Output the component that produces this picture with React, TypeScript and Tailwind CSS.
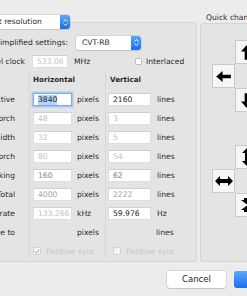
const Arrow = ({ rot = 0 }: { rot?: number }) => (
  <svg width="15" height="11" viewBox="0 0 16 12" style={{ transform: `rotate(${rot}deg)` }}>
    <polygon points="0,6 7,0 7,4 16,4 16,8 7,8 7,12" fill="#000" />
  </svg>
);

const Double = ({ rot = 0 }: { rot?: number }) => (
  <svg width="18" height="10" viewBox="0 0 18 10" style={{ transform: `rotate(${rot}deg)` }}>
    <polygon points="0,5 5,0 5,3 13,3 13,0 18,5 13,10 13,7 5,7 5,10" fill="#000" />
  </svg>
);

const Shrink = ({ rot = 0 }: { rot?: number }) => (
  <svg width="14" height="14" viewBox="0 0 14 14" style={{ transform: `rotate(${rot}deg)` }}>
    <polygon points="4,0 10,0 10,2 13,2 7,6.5 1,2 4,2" fill="#000" />
    <polygon points="4,14 10,14 10,12 13,12 7,7.5 1,12 4,12" fill="#000" />
  </svg>
);

const Cell = ({ children }: { children?: React.ReactNode }) => (
  <div className="flex items-center justify-center bg-[#f6f6f6] border border-[#cacaca]">{children}</div>
);

const Stepper = () => (
  <div className="w-[10px] self-stretch rounded-r-[3px] bg-gradient-to-b from-[#5aa8fa] to-[#1a6cf0] flex flex-col items-center justify-center gap-[1px]">
    <svg width="5" height="3" viewBox="0 0 5 3"><path d="M0.5 2.5 L2.5 0.5 L4.5 2.5" stroke="#fff" strokeWidth="0.9" fill="none" /></svg>
    <svg width="5" height="3" viewBox="0 0 5 3"><path d="M0.5 0.5 L2.5 2.5 L4.5 0.5" stroke="#fff" strokeWidth="0.9" fill="none" /></svg>
  </div>
);

const Field = ({ v, c, w = 'w-[39px]', focus }: { v: string; c: string; w?: string; focus?: boolean }) => (
  <div
    className={`${w} h-[13px] bg-white flex items-center pl-[4px] ${
      focus ? 'border border-[#7eaae6] shadow-[0_0_0_1.5px_#a9c8f0]' : 'border border-[#dedede] border-t-[#cfcfcf]'
    }`}
  >
    <span className={`${c} ${focus ? 'bg-[#b5d4fb]' : ''} leading-[10px]`}>{v}</span>
  </div>
);

const rows = [
  { l: 'Active', h: '3840', hc: 'text-[#1e1e1e]', hf: true, v: '2160', vc: 'text-[#1e1e1e]', hu: 'pixels', vu: 'lines' },
  { l: 'Front porch', h: '48', hc: 'text-[#c2c2c2]', v: '3', vc: 'text-[#c2c2c2]', hu: 'pixels', vu: 'lines' },
  { l: 'Sync width', h: '32', hc: 'text-[#c2c2c2]', v: '5', vc: 'text-[#c2c2c2]', hu: 'pixels', vu: 'lines' },
  { l: 'Back porch', h: '80', hc: 'text-[#c2c2c2]', v: '54', vc: 'text-[#c2c2c2]', hu: 'pixels', vu: 'lines' },
  { l: 'Blanking', h: '160', hc: 'text-[#858585]', v: '62', vc: 'text-[#7a7a7a]', hu: 'pixels', vu: 'lines' },
  { l: 'Total', h: '4000', hc: 'text-[#a2a2a2]', v: '2222', vc: 'text-[#a2a2a2]', hu: 'pixels', vu: 'lines' },
  { l: 'Scan rate', h: '133.266', hc: 'text-[#c2c2c2]', v: '59.976', vc: 'text-[#1e1e1e]', hu: 'kHz', vu: 'Hz' },
];

export default function App() {
  return (
    <div className="relative w-[247px] h-[296px] overflow-hidden bg-[#ececec] font-['DejaVu_Sans',sans-serif] text-[7.6px] text-[#2a2a2a]">
      <div className="flex ml-[-110px] pt-[22px] gap-[3px]">
        {/* main settings box */}
        <div className="relative w-[307px] h-[240px] shrink-0 rounded-[3px] border border-[#d4d4d4] bg-[#e4e4e4] pt-[10px]">
          {/* title popup sits on the border */}
          <div className="absolute left-[69px] top-[-8px] w-[110px] h-[14px] flex rounded-[3px] bg-white shadow-[0_0_0_0.5px_#c4c4c4,0_1px_1px_rgba(0,0,0,0.12)]">
            <span className="flex-1 pl-[14px] flex items-center whitespace-nowrap">Default resolution</span>
            <Stepper />
          </div>

          <div className="absolute left-[138px] top-[49px] h-[186px] w-px bg-[#d6d6d6]" />
          <div className="absolute left-[214px] top-[49px] h-[186px] w-px bg-[#d6d6d6]" />

          <div className="flex items-center h-[19px]">
            <span className="w-[177px] text-right">Simplified settings:</span>
            <div className="ml-[8px] w-[65px] h-[14px] flex rounded-[3px] bg-white shadow-[0_0_0_0.5px_#c4c4c4,0_1px_1px_rgba(0,0,0,0.12)]">
              <span className="flex-1 pl-[6px] flex items-center">CVT-RB</span>
              <Stepper />
            </div>
          </div>

          <div className="flex items-center h-[19px]">
            <span className="w-[134px] text-right">Pixel clock</span>
            <div className="ml-[7px]">
              <Field v="533.06" c="text-[#c4c4c4]" w="w-[36px]" />
            </div>
            <span className="ml-[6px] w-[61px]">MHz</span>
            <div className="w-[7px] h-[7px] bg-white border border-[#bdbdbd] rounded-[1.5px]" />
            <span className="ml-[4px]">Interlaced</span>
          </div>

          <div className="grid grid-cols-[142px_39px_36px_43px_1fr] auto-rows-[19px] items-center">
            <span />
            <span className="font-bold text-[7.2px]">Horizontal</span>
            <span />
            <span className="font-bold text-[7.2px] pl-[2px]">Vertical</span>
            <span />

            {rows.map((r) => (
              <div key={r.l} className="contents">
                <span className="text-right pr-[18px]">{r.l}</span>
                <Field v={r.h} c={r.hc} focus={r.hf} />
                <span className="pl-[5px]">{r.hu}</span>
                <Field v={r.v} c={r.vc} w="w-[43px]" />
                <span className="pl-[6px]">{r.vu}</span>
              </div>
            ))}

            <span className="text-right pr-[18px]">Scale to</span>
            <span />
            <span className="pl-[5px]">pixels</span>
            <span />
            <span className="pl-[5px]">lines</span>

            <span />
            <div className="col-span-2 flex items-center gap-[5px] text-[#c4c4c4]">
              <div className="w-[8px] h-[8px] bg-[#f4f4f4] border border-[#d0d0d0] rounded-[1.5px] flex items-center justify-center">
                <svg width="6" height="5" viewBox="0 0 6 5"><path d="M0.6 2.6 L2.3 4.2 L5.4 0.6" stroke="#a9a9a9" strokeWidth="1" fill="none" /></svg>
              </div>
              <span>Positive sync.</span>
            </div>
            <div className="col-span-2 flex items-center gap-[5px] pl-[5px] text-[#c4c4c4]">
              <div className="w-[8px] h-[8px] bg-[#f4f4f4] border border-[#d0d0d0] rounded-[1.5px]" />
              <span>Positive sync.</span>
            </div>
          </div>
        </div>

        {/* quick change */}
        <div className="flex flex-col mt-[-10px] shrink-0">
          <span className="h-[11px] pl-[6px] flex items-center whitespace-nowrap">Quick change</span>
          <div className="w-[90px] h-[239px] rounded-[3px] border border-[#d4d4d4] bg-[#e4e4e4] pl-[11px] pt-[16px]">
            <div className="grid grid-cols-[23px_23px_23px] grid-rows-[24px_24px_24px]">
              <span />
              <Cell><Arrow rot={90} /></Cell>
              <span />
              <Cell><Arrow /></Cell>
              <span />
              <Cell><Arrow rot={180} /></Cell>
              <span />
              <Cell><Arrow rot={-90} /></Cell>
              <span />
            </div>
            <div className="grid grid-cols-[23px_23px_23px] grid-rows-[24px_24px_24px] mt-[33px]">
              <span />
              <Cell><Double rot={90} /></Cell>
              <span />
              <Cell><Double /></Cell>
              <span />
              <Cell><Shrink rot={90} /></Cell>
              <span />
              <Cell><Shrink /></Cell>
              <span />
            </div>
          </div>
        </div>
      </div>

      {/* dialog buttons */}
      <div className="flex gap-[8px] ml-[167px] mt-[9px]">
        <div className="w-[59px] h-[17px] shrink-0 rounded-[3px] bg-white shadow-[0_0_0_0.5px_#c2c2c2,0_1px_1px_rgba(0,0,0,0.15)] flex items-center justify-center text-[8.5px] text-[#222]">
          Cancel
        </div>
        <div className="w-[59px] h-[17px] shrink-0 rounded-[3px] bg-gradient-to-b from-[#5aa8fa] to-[#1a6cf0] flex items-center justify-center text-[8.5px] text-white">
          OK
        </div>
      </div>
    </div>
  );
}
